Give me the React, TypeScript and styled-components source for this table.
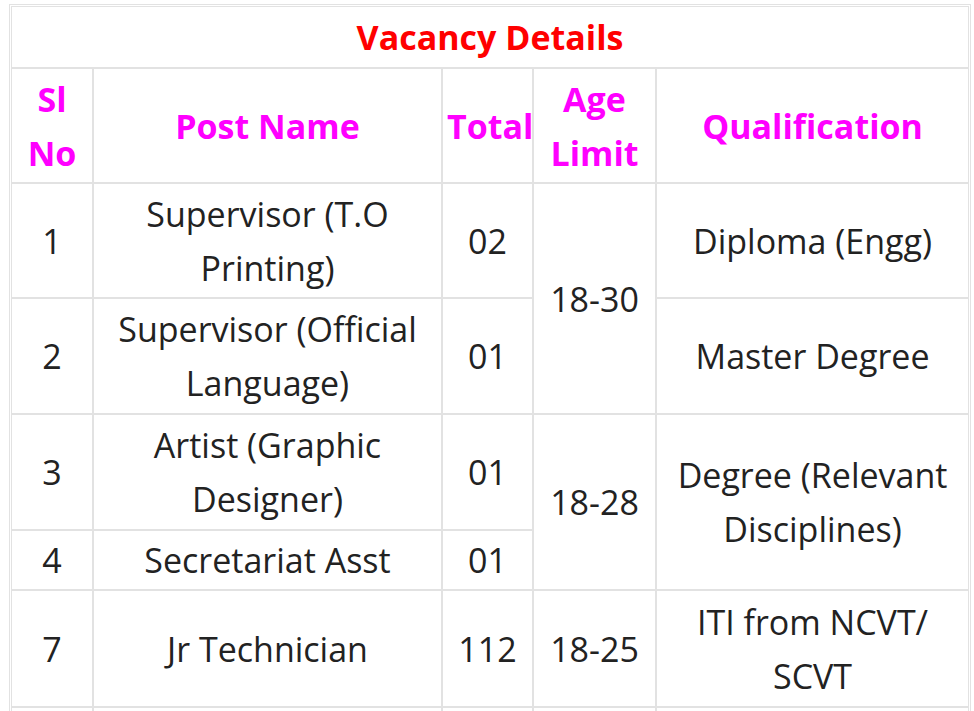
import React from 'react';
import styled, { createGlobalStyle } from 'styled-components';

const GlobalStyle = createGlobalStyle`
  html, body {
    margin: 0;
    padding: 0;
    background: #fff;
  }
`;

const Page = styled.div`
  padding: 4px 0 0 9px;
  font-family: "Open Sans", "Noto Sans", sans-serif;
  color: #222;
`;

const Table = styled.table`
  width: 962px;
  table-layout: fixed;
  border-collapse: separate;
  border-spacing: 0;
  border: 1px solid #e2e2e2;
  padding: 1px;
`;

const Cell = styled.td`
  border: 1px solid #e2e2e2;
  padding: 2px 4px;
  text-align: center;
  vertical-align: middle;
  font-size: 34px;
  line-height: 54px;
`;

const TitleCell = styled(Cell)`
  color: #f00;
  font-weight: 700;
  height: 60px;
  padding: 0 4px;
`;

const HeadCell = styled(Cell).attrs({ as: 'th' })`
  color: #f0f;
  font-weight: 700;
`;

const SpacerRow = styled.tr`
  height: 40px;
`;

type Row = {
  sl: string;
  post: string;
  total: string;
  age?: { text: string; span: number };
  qual?: { text: string; span: number };
  height: number;
};

const rows: Row[] = [
  { sl: '1', post: 'Supervisor (T.O Printing)', total: '02', age: { text: '18-30', span: 2 }, qual: { text: 'Diploma (Engg)', span: 1 }, height: 115 },
  { sl: '2', post: 'Supervisor (Official Language)', total: '01', qual: { text: 'Master Degree', span: 1 }, height: 116 },
  { sl: '3', post: 'Artist (Graphic Designer)', total: '01', age: { text: '18-28', span: 2 }, qual: { text: 'Degree (Relevant Disciplines)', span: 2 }, height: 116 },
  { sl: '4', post: 'Secretariat Asst', total: '01', height: 60 },
  { sl: '7', post: 'Jr Technician', total: '112', age: { text: '18-25', span: 1 }, qual: { text: 'ITI from NCVT/ SCVT', span: 1 }, height: 117 },
];

const widths = [82, 349, 91, 123, 313];

export default function App() {
  return (
    <>
      <GlobalStyle />
      <Page>
        <Table>
          <colgroup>
            {widths.map((w, i) => (
              <col key={i} style={{ width: w }} />
            ))}
          </colgroup>
          <tbody>
            <tr>
              <TitleCell colSpan={5}>Vacancy Details</TitleCell>
            </tr>
            <tr style={{ height: 115 }}>
              <HeadCell>Sl No</HeadCell>
              <HeadCell>Post Name</HeadCell>
              <HeadCell>Total</HeadCell>
              <HeadCell>Age Limit</HeadCell>
              <HeadCell>Qualification</HeadCell>
            </tr>
            {rows.map((r) => (
              <tr key={r.sl} style={{ height: r.height }}>
                <Cell>{r.sl}</Cell>
                <Cell>{r.post}</Cell>
                <Cell>{r.total}</Cell>
                {r.age && <Cell rowSpan={r.age.span}>{r.age.text}</Cell>}
                {r.qual && <Cell rowSpan={r.qual.span}>{r.qual.text}</Cell>}
              </tr>
            ))}
            <SpacerRow>
              <Cell />
              <Cell />
              <Cell />
              <Cell />
              <Cell />
            </SpacerRow>
          </tbody>
        </Table>
      </Page>
    </>
  );
}
